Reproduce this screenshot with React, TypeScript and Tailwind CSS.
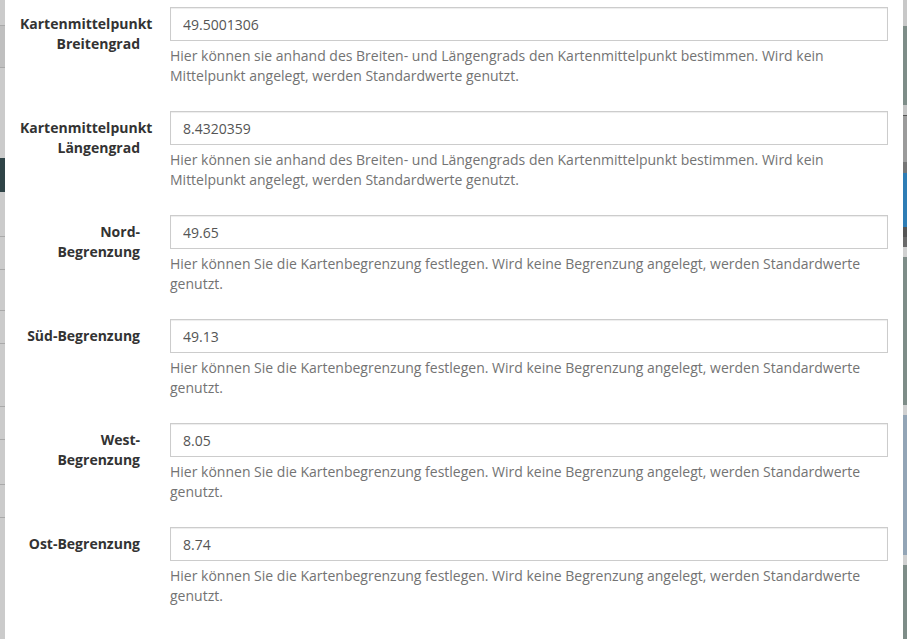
import React from "react";

interface Field {
  label: React.ReactNode;
  value: string;
  help: string;
}

const centerHelp =
  "Hier können sie anhand des Breiten- und Längengrads den Kartenmittelpunkt bestimmen. Wird kein Mittelpunkt angelegt, werden Standardwerte genutzt.";
const boundsHelp =
  "Hier können Sie die Kartenbegrenzung festlegen. Wird keine Begrenzung angelegt, werden Standardwerte genutzt.";

const fields: Field[] = [
  { label: <>Kartenmittelpunkt Breitengrad</>, value: "49.5001306", help: centerHelp },
  { label: <>Kartenmittelpunkt Längengrad</>, value: "8.4320359", help: centerHelp },
  { label: <>Nord-<br />Begrenzung</>, value: "49.65", help: boundsHelp },
  { label: <>Süd-Begrenzung</>, value: "49.13", help: boundsHelp },
  { label: <>West-<br />Begrenzung</>, value: "8.05", help: boundsHelp },
  { label: <>Ost-Begrenzung</>, value: "8.74", help: boundsHelp },
];

// backdrop page peeking out on the left edge
const LeftStrip = () => (
  <div className="flex w-[5px] shrink-0 flex-col bg-[#cbcbcb]">
    <div className="h-[26px] border-b border-[#a9a9a9]" />
    <div className="h-[42px] border-b border-[#a9a9a9] bg-[#bfbfbf]" />
    <div className="h-[90px]" />
    <div className="h-[34px] bg-[#2f4447]" />
    <div className="h-[45px] border-b border-[#a9a9a9]" />
    <div className="h-[33px] border-b border-[#a9a9a9]" />
    <div className="h-[41px] border-b border-[#a9a9a9]" />
    <div className="h-[33px] border-b border-[#a9a9a9]" />
    <div className="h-[63px] border-b border-[#a9a9a9]" />
    <div className="h-[33px] border-b border-[#a9a9a9]" />
    <div className="h-[45px] border-b border-[#a9a9a9]" />
    <div className="h-[33px] border-b border-[#a9a9a9]" />
    <div className="flex-1" />
  </div>
);

const RightStrip = () => (
  <div className="flex w-[4px] shrink-0 flex-col">
    <div className="h-[26px] bg-[#c8c8c8]" />
    <div className="h-[79px] bg-[#7e8d88]" />
    <div className="h-[11px] border-b border-[#555] bg-[#c4c4c4]" />
    <div className="h-[46px] bg-[#9b9b9b]" />
    <div className="h-[11px] bg-[#767676]" />
    <div className="h-[54px] bg-[#2e7db5]" />
    <div className="h-[10px] bg-[#555]" />
    <div className="h-[10px] bg-[#6a6a6a]" />
    <div className="h-[10px] bg-[#d0d0d0]" />
    <div className="h-[148px] bg-[#7e8d88]" />
    <div className="h-[10px] bg-[#d0d0d0]" />
    <div className="h-[140px] bg-[#93a5b6]" />
    <div className="h-[10px] bg-[#d0d0d0]" />
    <div className="flex-1 bg-[#7e8d88]" />
  </div>
);

export default function App() {
  return (
    <div className="flex h-[639px] w-[907px] overflow-hidden bg-white font-['Open_Sans',sans-serif] text-sm">
      <LeftStrip />
      <form className="flex-1 px-[15px] pt-[7px]">
        {fields.map((f, i) => (
          <div key={i} className="mb-[15px] flex gap-[30px]">
            <label className="w-[120px] shrink-0 pt-[7px] text-right font-bold leading-5 text-[#333]">
              {f.label}
            </label>
            <div className="flex-1">
              <input
                type="text"
                readOnly
                value={f.value}
                className="block h-[34px] w-full border border-[#ccc] bg-white px-3 text-sm text-[#555] shadow-[inset_0_1px_1px_rgba(0,0,0,0.075)] outline-none"
              />
              <p className="mt-[5px] mb-[10px] leading-5 text-[#737373]">{f.help}</p>
            </div>
          </div>
        ))}
      </form>
      <RightStrip />
    </div>
  );
}
